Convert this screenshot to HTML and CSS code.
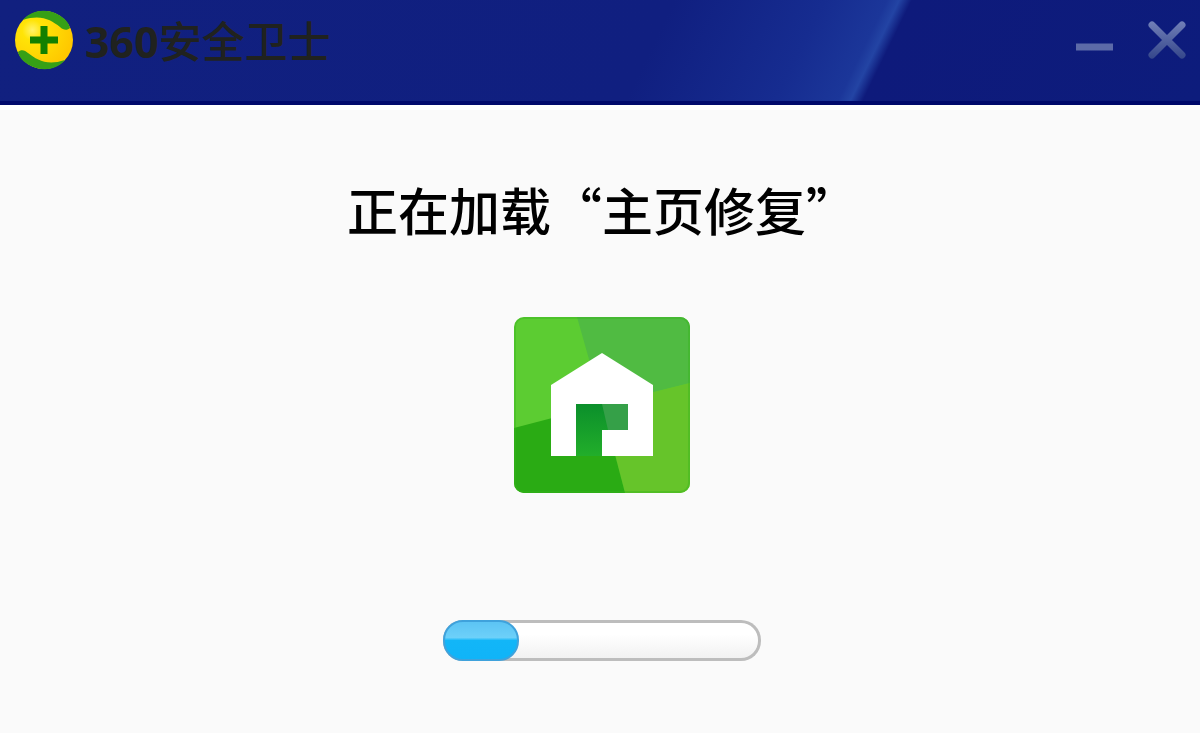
FILE: index.html
```
<!DOCTYPE html>
<html lang="zh-CN">
    <head>
        <meta charset="utf-8" />
        <title>360安全卫士</title>
        <link rel="stylesheet" href="styles.css">
    </head>
    <body>
        <header class="titlebar">
            <svg class="logo" viewBox="0 0 60 60" aria-hidden="true">
                <defs>
                    <radialGradient id="ball" cx="0.3" cy="0.33" r="0.7">
                        <stop offset="0" stop-color="#fff36a" />
                        <stop offset="0.25" stop-color="#ffe407" />
                        <stop offset="1" stop-color="#ffc800" />
                    </radialGradient>
                </defs>
                <circle cx="30" cy="30" r="29" fill="url(#ball)" />
                <path d="M9 10C18 -1 33 -1 43 4C51 8 55 13 56 18C53 21 49 20 46 17C37 10 27 4 9 10Z" fill="#36a016" />
                <path d="M51 50C42 61 27 61 17 56C9 52 5 47 4 42C7 39 11 40 14 43C23 50 33 56 51 50Z" fill="#36a016" />
                <path d="M30 16V44M16 30H44" fill="none" stroke="#128000" stroke-width="7" />
            </svg>
            <span class="name"><b>360</b>安全卫士</span>
            <div class="controls">
                <button type="button" aria-label="最小化">
                    <svg viewBox="0 0 38 38" aria-hidden="true">
                        <path d="M0 26H37" stroke="#5c6aa8" stroke-width="7" />
                    </svg>
                </button>
                <button type="button" aria-label="关闭">
                    <svg viewBox="0 0 38 38" aria-hidden="true">
                        <defs>
                            <linearGradient id="cross" x1="0" y1="0" x2="0" y2="38" gradientUnits="userSpaceOnUse">
                                <stop offset="0" stop-color="#7280b8" />
                                <stop offset="1" stop-color="#34468a" />
                            </linearGradient>
                        </defs>
                        <path d="M4 4L34 34M34 4L4 34" stroke="url(#cross)" stroke-width="7" stroke-linecap="round" />
                    </svg>
                </button>
            </div>
        </header>
        <main class="loading">
            <h1 id="status">正在加载“主页修复”</h1>
            <svg class="home" viewBox="0 0 176 176" aria-hidden="true">
                <defs>
                    <clipPath id="tile">
                        <rect width="176" height="176" rx="10" />
                    </clipPath>
                    <linearGradient id="door" x1="0" y1="0" x2="0" y2="1">
                        <stop offset="0" stop-color="#0b8f2b" />
                        <stop offset="1" stop-color="#22ae2a" />
                    </linearGradient>
                </defs>
                <g clip-path="url(#tile)">
                    <rect width="176" height="176" fill="#5ccc32" />
                    <path d="M63 0H176V66L88 88Z" fill="#50bb42" />
                    <path d="M176 66V176H111L88 88Z" fill="#66c42a" />
                    <path d="M0 111L88 88L111 176H0Z" fill="#2aab14" />
                    <rect x="1" y="1" width="174" height="174" rx="9" fill="none" stroke="#34b51c" stroke-width="2" opacity="0.4" />
                </g>
                <path d="M62 87H114V113H88V139H62Z" fill="url(#door)" />
                <path d="M88 87H114V113H94Z" fill="#35a048" />
                <path d="M88 36L139 68V139H88V113H114V87H62V139H37V68Z" fill="#fff" />
            </svg>
            <progress class="bar" value="24" max="100" aria-labelledby="status"></progress>
        </main>
    </body>
</html>
```
FILE: styles.css
```
body{
    margin: 0;
    min-height: 100vh;
    background-color: #fafafa;
    color: #000;
    font-family: "Open Sans", "Noto Sans CJK SC", sans-serif;
}

.titlebar{
    display: flex;
    align-items: flex-start;
    box-sizing: border-box;
    height: 105px;
    padding: 10px 14px;
    border-bottom: 4px solid #010a6c;
    background: linear-gradient(116deg, #11207f 0%, #101f80 54%, #162c90 66%, #1b3699 71%, #2344a4 72%, #0e1a7b 73%, #0d1c7c 100%);
    box-shadow: 0 5px 0 #fff;
}

.logo{
    width: 60px;
    height: 60px;
}

.name{
    margin-left: 11px;
    color: #20221f;
    font-size: 43px;
    line-height: 64px;
    font-weight: 500;
}

.name b{
    font-weight: bold;
}

.controls{
    display: flex;
    gap: 34px;
    margin-left: auto;
    padding-top: 11px;
}

.controls button{
    width: 38px;
    height: 38px;
    padding: 0;
    border: 0;
    background: none;
    cursor: pointer;
}

.controls svg{
    display: block;
}

.loading{
    display: flex;
    flex-direction: column;
    align-items: center;
    padding: 68px 0 0 4px;
}

h1{
    margin: 0;
    font-family: "Noto Sans CJK SC", sans-serif;
    font-size: 51px;
    line-height: 72px;
    font-weight: 500;
}

.home{
    width: 176px;
    height: 176px;
    margin-top: 72px;
}

.bar{
    width: 318px;
    height: 41px;
    margin-top: 127px;
    border: 0;
    appearance: none;
    background: none;
}

.bar::-webkit-progress-bar{
    border-radius: 20px;
    background: linear-gradient(#fff, #fff 35%, #f0f0f0);
    box-shadow: inset 0 0 0 3px #bdbdbd;
}

.bar::-webkit-progress-value{
    box-sizing: border-box;
    border: 2px solid #3fa2dc;
    border-radius: 20px;
    background: linear-gradient(#5cc4f4, #6dd0f9 42%, #12b6f8 50%, #10b4f8);
}
```
